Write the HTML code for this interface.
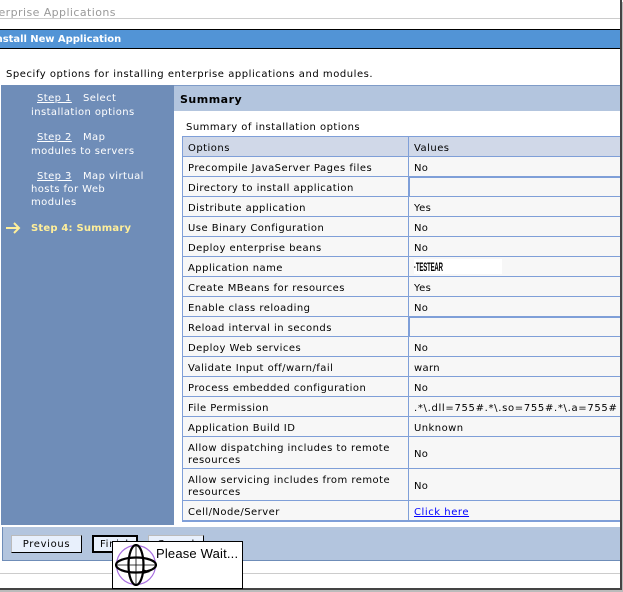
<!DOCTYPE html>
<html><head><meta charset="utf-8">
<style>
html,body{margin:0;padding:0;background:#fff}
#p{position:relative;width:623px;height:592px;overflow:hidden;background:#fff;font-family:"DejaVu Sans","Liberation Sans",sans-serif;font-size:10px;color:#000}
#p div,#p a,#p svg{position:absolute}
.t{white-space:nowrap;line-height:12px;letter-spacing:.32px}
.s{color:#fff;left:31px;letter-spacing:.42px;margin-top:1px}
.s u{letter-spacing:.42px}
.r{left:183px;width:437px;background:#f7f7f7;border-bottom:1px solid #7f9fd8}
.l{left:188px;margin-top:2px}
.v{left:414px;margin-top:2px}
.btn{background:#e8f0fc;border:1px solid #000;border-left-color:#bbb;border-top-color:#bbb;box-sizing:border-box;text-align:center;line-height:17px;letter-spacing:.65px;white-space:nowrap}
</style></head><body>
<div id="p">
<div class="t" style="left:-21px;top:7px;color:#999;font-size:11px;letter-spacing:.42px">Enterprise Applications</div>
<div style="left:0;top:18px;width:620px;height:1px;background:#ccc"></div>
<div style="left:0;top:29px;width:620px;height:18px;background:#5294d6;border-top:1px solid #000;border-bottom:1px solid #000"></div>
<div class="t" style="left:-8px;top:34px;color:#fff;font-weight:bold;font-size:10px;letter-spacing:-.05px">Install New Application</div>
<div class="t" style="left:6px;top:69px;letter-spacing:.54px">Specify options for installing enterprise applications and modules.</div>

<div style="left:1px;top:85px;width:173px;height:440px;background:#6f8db8"></div>
<div style="left:174px;top:85px;width:446px;height:26px;background:#b3c5de;border-top:1px solid #7f9cc8;box-sizing:border-box"></div>
<div class="t" style="left:180px;top:94px;font-weight:bold;font-size:11px;letter-spacing:.5px">Summary</div>

<div class="t s" style="left:37px;top:92px"><u>Step 1</u></div><div class="t s" style="left:83px;top:92px">Select</div>
<div class="t s" style="top:106px">installation options</div>
<div class="t s" style="left:37px;top:131px"><u>Step 2</u></div><div class="t s" style="left:83px;top:131px">Map</div>
<div class="t s" style="top:145px">modules to servers</div>
<div class="t s" style="left:37px;top:170px"><u>Step 3</u></div><div class="t s" style="left:83px;top:170px">Map virtual</div>
<div class="t s" style="top:183px">hosts for Web</div>
<div class="t s" style="top:196px">modules</div>
<svg style="left:5px;top:221px" width="16" height="14" viewBox="0 0 16 14"><path d="M1 7H14M9 2L14 7L9 12" fill="none" stroke="#ffef9a" stroke-width="2"/></svg>
<div class="t" style="left:31px;top:223px;color:#ffef9a;font-weight:bold;letter-spacing:.2px">Step 4: Summary</div>

<div class="t" style="left:186px;top:122px;letter-spacing:.47px">Summary of installation options</div>

<div style="left:182px;top:136px;width:438px;height:386px;background:#7f9fd8"></div>
<div style="left:183px;top:137px;width:437px;height:19px;background:#d0d8e8"></div>
<div class="r" style="top:157px;height:19px"></div>
<div class="r" style="top:177px;height:19px"></div>
<div class="r" style="top:197px;height:19px"></div>
<div class="r" style="top:217px;height:19px"></div>
<div class="r" style="top:237px;height:19px"></div>
<div class="r" style="top:257px;height:19px"></div>
<div class="r" style="top:277px;height:19px"></div>
<div class="r" style="top:297px;height:19px"></div>
<div class="r" style="top:317px;height:19px"></div>
<div class="r" style="top:337px;height:19px"></div>
<div class="r" style="top:357px;height:19px"></div>
<div class="r" style="top:377px;height:19px"></div>
<div class="r" style="top:397px;height:19px"></div>
<div class="r" style="top:417px;height:19px"></div>
<div class="r" style="top:437px;height:31px"></div>
<div class="r" style="top:469px;height:31px"></div>
<div class="r" style="top:501px;height:19px"></div>
<div style="left:408px;top:137px;width:1px;height:385px;background:#7f9fd8"></div>
<div style="left:409px;top:177px;width:1px;height:20px;background:#7f9fd8"></div>
<div style="left:409px;top:177px;width:211px;height:1px;background:#7f9fd8"></div>
<div style="left:409px;top:317px;width:1px;height:20px;background:#7f9fd8"></div>
<div style="left:409px;top:317px;width:211px;height:1px;background:#7f9fd8"></div>
<div style="left:414px;top:259px;width:88px;height:15px;background:#fff"></div>

<div class="t l" style="top:141px;letter-spacing:.47px">Options</div><div class="t v" style="top:141px;letter-spacing:.47px">Values</div>
<div class="t l" style="top:161px;letter-spacing:.47px">Precompile JavaServer Pages files</div><div class="t v" style="top:161px">No</div>
<div class="t l" style="top:181px;letter-spacing:.47px">Directory to install application</div>
<div class="t l" style="top:201px;letter-spacing:.47px">Distribute application</div><div class="t v" style="top:201px">Yes</div>
<div class="t l" style="top:221px;letter-spacing:.47px">Use Binary Configuration</div><div class="t v" style="top:221px">No</div>
<div class="t l" style="top:241px;letter-spacing:.47px">Deploy enterprise beans</div><div class="t v" style="top:241px">No</div>
<div class="t l" style="top:261px;letter-spacing:.47px">Application name</div>
<div class="t" style="left:414px;top:260px;font-family:'Liberation Sans',sans-serif;font-size:12px;line-height:14px;font-weight:bold;letter-spacing:-.3px;transform:scaleX(.5);transform-origin:0 0">·TESTEAR</div>
<div class="t l" style="top:281px;letter-spacing:.47px">Create MBeans for resources</div><div class="t v" style="top:281px">Yes</div>
<div class="t l" style="top:301px;letter-spacing:.47px">Enable class reloading</div><div class="t v" style="top:301px">No</div>
<div class="t l" style="top:321px;letter-spacing:.47px">Reload interval in seconds</div>
<div class="t l" style="top:341px;letter-spacing:.47px">Deploy Web services</div><div class="t v" style="top:341px">No</div>
<div class="t l" style="top:361px;letter-spacing:.47px">Validate Input off/warn/fail</div><div class="t v" style="top:361px">warn</div>
<div class="t l" style="top:381px;letter-spacing:.47px">Process embedded configuration</div><div class="t v" style="top:381px">No</div>
<div class="t l" style="top:401px;letter-spacing:.47px">File Permission</div><div class="t v" style="top:401px;letter-spacing:.68px">.*\.dll=755#.*\.so=755#.*\.a=755#</div>
<div class="t l" style="top:421px;letter-spacing:.47px">Application Build ID</div><div class="t v" style="top:421px;letter-spacing:.45px">Unknown</div>
<div class="t l" style="top:441px;letter-spacing:.47px">Allow dispatching includes to remote</div>
<div class="t l" style="top:453px;letter-spacing:.47px">resources</div><div class="t v" style="top:447px">No</div>
<div class="t l" style="top:473px;letter-spacing:.47px">Allow servicing includes from remote</div>
<div class="t l" style="top:485px;letter-spacing:.47px">resources</div><div class="t v" style="top:479px">No</div>
<div class="t l" style="top:505px;letter-spacing:.47px">Cell/Node/Server</div>
<a class="t" style="left:414px;top:507px;color:#00f;letter-spacing:.55px;text-decoration:underline">Click here</a>

<div style="left:2px;top:527px;width:618px;height:34px;background:#b3c5de;border-bottom:1px solid #6f8db8;border-left:1px solid #6f8db8;box-sizing:border-box"></div>
<div class="btn" style="left:11px;top:535px;width:71px;height:18px">Previous</div>
<div class="btn" style="left:92px;top:535px;width:46px;height:18px;border:2px solid #000;text-align:left;padding-left:6px;line-height:15px">Finish</div>
<div class="btn" style="left:148px;top:535px;width:56px;height:18px">Cancel</div>
<div style="left:0;top:573px;width:620px;height:1px;background:#ccc"></div>

<div style="left:112px;top:541px;width:131px;height:48px;background:#fff;border:1px solid #000;box-sizing:border-box;z-index:3"></div>
<svg style="left:115px;top:544px;z-index:4" width="42" height="42" viewBox="0 0 42 42">
<circle cx="21" cy="21" r="19.5" fill="none" stroke="#a86ee0" stroke-width="1.2"/>
<ellipse cx="21" cy="21" rx="20" ry="7.5" fill="none" stroke="#000" stroke-width="2.2"/>
<ellipse cx="21" cy="21" rx="7.5" ry="20" fill="none" stroke="#000" stroke-width="2.2"/>
<path d="M1 21H41M21 1V41" stroke="#000" stroke-width=".8"/>
<path d="M28 25l7 3l-7 2z" fill="#000"/>
</svg>
<div class="t" style="left:156px;top:547px;font-family:'Liberation Sans',sans-serif;font-size:13px;line-height:14px;letter-spacing:.18px;z-index:4">Please Wait...</div>

<div style="left:620px;top:0;width:2px;height:590px;background:#444"></div>
<div style="left:622px;top:2px;width:1px;height:590px;background:#bbb"></div>
<div style="left:0;top:588px;width:622px;height:2px;background:#444;z-index:2"></div>
<div style="left:0;top:590px;width:623px;height:2px;background:#bbb;z-index:2"></div>
</div>
</body></html>
